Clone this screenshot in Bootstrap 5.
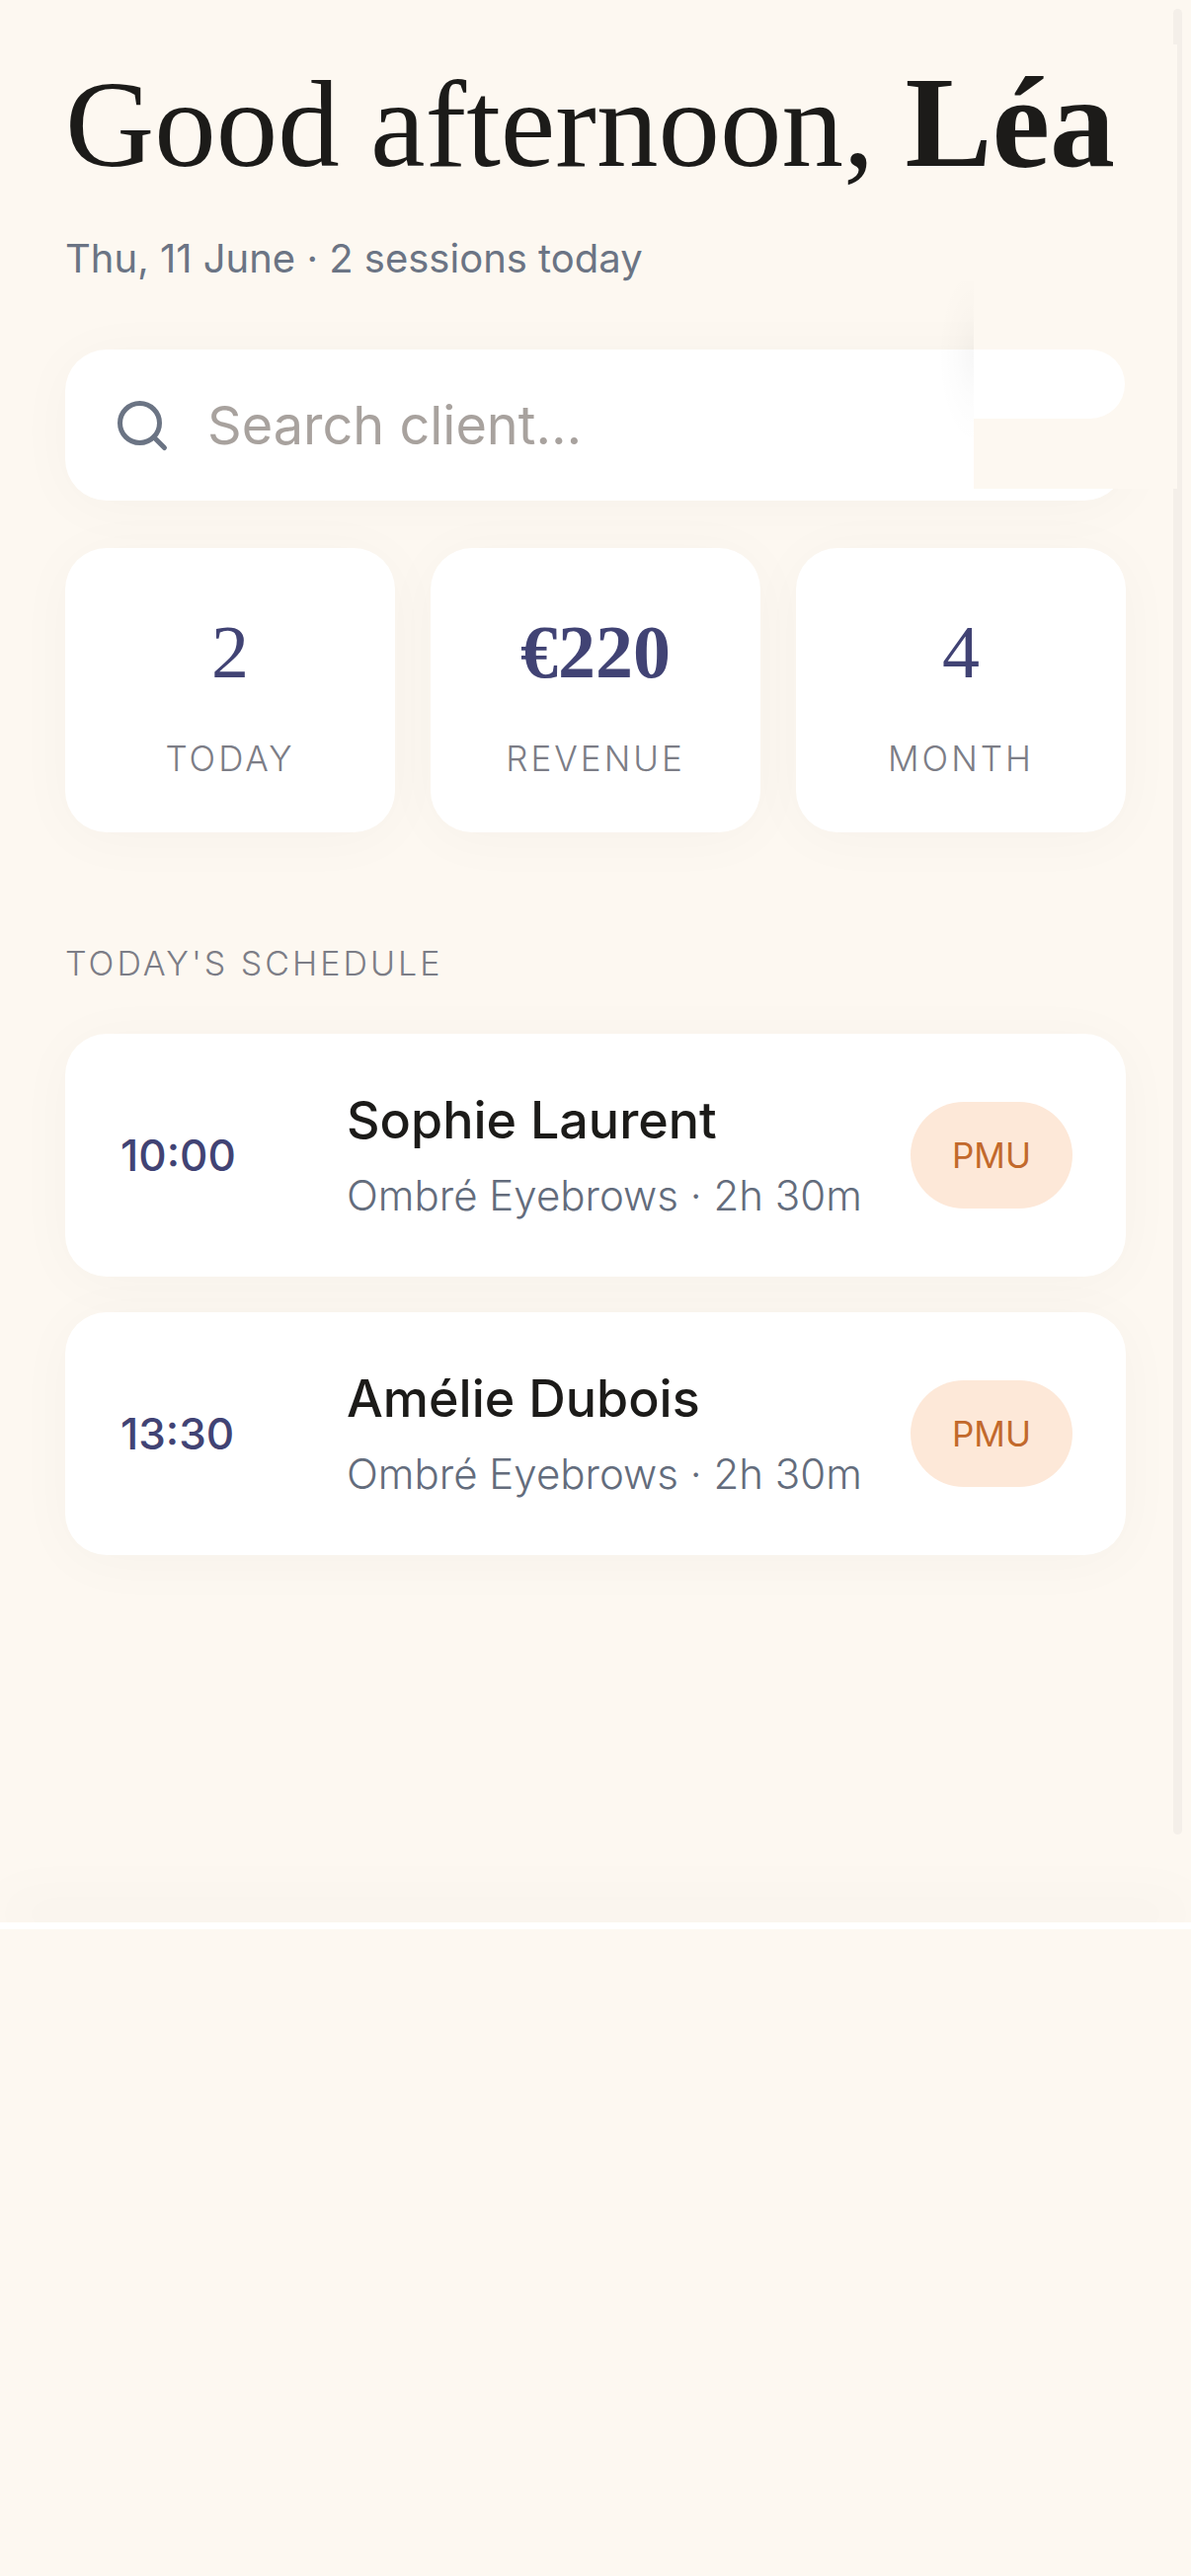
<!DOCTYPE html>
<html lang="en">
<head>
<meta charset="utf-8">
<meta name="viewport" content="width=device-width, initial-scale=1">
<title>Today</title>
<link href="https://cdn.jsdelivr.net/npm/bootstrap@5.3.0/dist/css/bootstrap.min.css" rel="stylesheet">
<style>
  :root { --cream: #fdf8f1; --ink: #1c1b19; --indigo: #414374; --slate: #6b7484; --soft: 0 6px 60px rgba(40, 30, 20, .03); }
  body { background: var(--cream); color: var(--ink); font-family: Inter, "Noto Sans", sans-serif; }
  .screen { padding: 60px 66px 372px; overflow: hidden; }
  .greeting { font: 400 125px/132px "Liberation Serif", serif; margin: 0 0 46px; white-space: nowrap; z-index: 2; }
  .greeting strong { font-size: 132px; line-height: 100px; font-weight: 700; }
  .dateline { font-size: 40px; line-height: 48px; color: var(--slate); margin: 0 0 68px; }
  .panel { background: #fff; border-radius: 42px; box-shadow: var(--soft); }
  .searchbar { height: 153px; padding: 0 48px; gap: 36px; margin-bottom: 48px; }
  .searchbar svg { width: 60px; height: 60px; flex: none; }
  .searchbar input { font-size: 54px; line-height: 66px; font-weight: 400; padding: 0; }
  .searchbar input::placeholder { color: #a8a29e; opacity: 1; }
  .stats { gap: 36px; }
  .stat { padding: 69px 12px 53px; }
  .figure-num { font: 400 76px/72px "Liberation Serif", serif; color: var(--indigo); margin-bottom: 50px; }
  .figure-num.strong { font-weight: 700; }
  .caps { font-size: 35px; line-height: 44px; font-weight: 300; letter-spacing: 3px; color: #7c7d86; text-transform: uppercase; margin: 0; }
  .schedule-title { font-size: 34px; margin: 111px 0 49px; }
  .sessions { gap: 36px; }
  .session { height: 246px; padding: 0 54px 0 56px; }
  .clock { width: 229px; flex: none; font-size: 44px; line-height: 52px; font-weight: 500; color: var(--indigo); }
  .client { font-size: 52px; line-height: 62px; font-weight: 500; margin: 0 0 19px; }
  .service { font-size: 42px; line-height: 52px; font-weight: 300; color: #636c7c; margin: 0; white-space: nowrap; }
  .tag { height: 108px; padding: 0 42px; border-radius: 54px; background: #fde8d8; color: #c2692c; font-size: 35px; font-weight: 400; }
  .track { top: 9px; right: 9px; width: 9px; height: 1849px; border-radius: 5px; background: #f4efe9; }
  .cover { top: 45px; right: 14px; width: 206px; height: 450px; background: var(--cream); }
  .cover-pill { top: 309px; left: 0; right: 53px; height: 70px; background: #fff; border-radius: 0 35px 35px 0; }
  .cover-shade { top: 240px; right: 100%; width: 36px; height: 200px; background: radial-gradient(ellipse 36px 90px at right 75px, rgba(0,0,0,.03), rgba(0,0,0,.01) 50%, transparent); }
  .tabbar { height: 7px; background: #fff; box-shadow: 0 -12px 60px rgba(40, 30, 20, .14); }
  .below { background: var(--cream); }
</style>
</head>
<body>
<div class="d-flex flex-column min-vh-100 position-relative">
  <main class="screen">
    <h1 class="greeting position-relative">Good afternoon, <strong>Léa</strong></h1>
    <p class="dateline">Thu, 11 June · 2 sessions today</p>

    <label class="searchbar panel d-flex align-items-center" for="client-search">
      <svg viewBox="0 0 24 24" fill="none" stroke="#6b7484" stroke-width="2" stroke-linecap="round" aria-hidden="true"><circle cx="11" cy="11" r="8"/><path d="m21 21-4.3-4.3"/></svg>
      <input id="client-search" type="text" class="form-control border-0 bg-transparent shadow-none" placeholder="Search client…" aria-label="Search client">
    </label>

    <section class="stats d-flex text-center">
      <div class="stat panel flex-fill w-100"><div class="figure-num">2</div><p class="caps">Today</p></div>
      <div class="stat panel flex-fill w-100"><div class="figure-num strong">€220</div><p class="caps">Revenue</p></div>
      <div class="stat panel flex-fill w-100"><div class="figure-num">4</div><p class="caps">Month</p></div>
    </section>

    <h2 class="caps schedule-title">Today's schedule</h2>
    <section class="sessions d-flex flex-column">
      <article class="session panel d-flex align-items-center">
        <time class="clock">10:00</time>
        <div class="flex-grow-1"><h3 class="client">Sophie Laurent</h3><p class="service">Ombré Eyebrows · 2h 30m</p></div>
        <span class="tag d-flex align-items-center">PMU</span>
      </article>
      <article class="session panel d-flex align-items-center">
        <time class="clock">13:30</time>
        <div class="flex-grow-1"><h3 class="client">Amélie Dubois</h3><p class="service">Ombré Eyebrows · 2h 30m</p></div>
        <span class="tag d-flex align-items-center">PMU</span>
      </article>
    </section>
  </main>
  <div class="tabbar"></div>
  <div class="below flex-grow-1 position-relative"></div>

  <!-- scroll track and the panel floating over the search bar -->
  <div class="track position-absolute"></div>
  <div class="cover position-absolute">
    <div class="cover-shade position-absolute"></div>
    <div class="cover-pill position-absolute"></div>
  </div>
</div>
<script src="https://cdn.jsdelivr.net/npm/bootstrap@5.3.0/dist/js/bootstrap.bundle.min.js"></script>
</body>
</html>
